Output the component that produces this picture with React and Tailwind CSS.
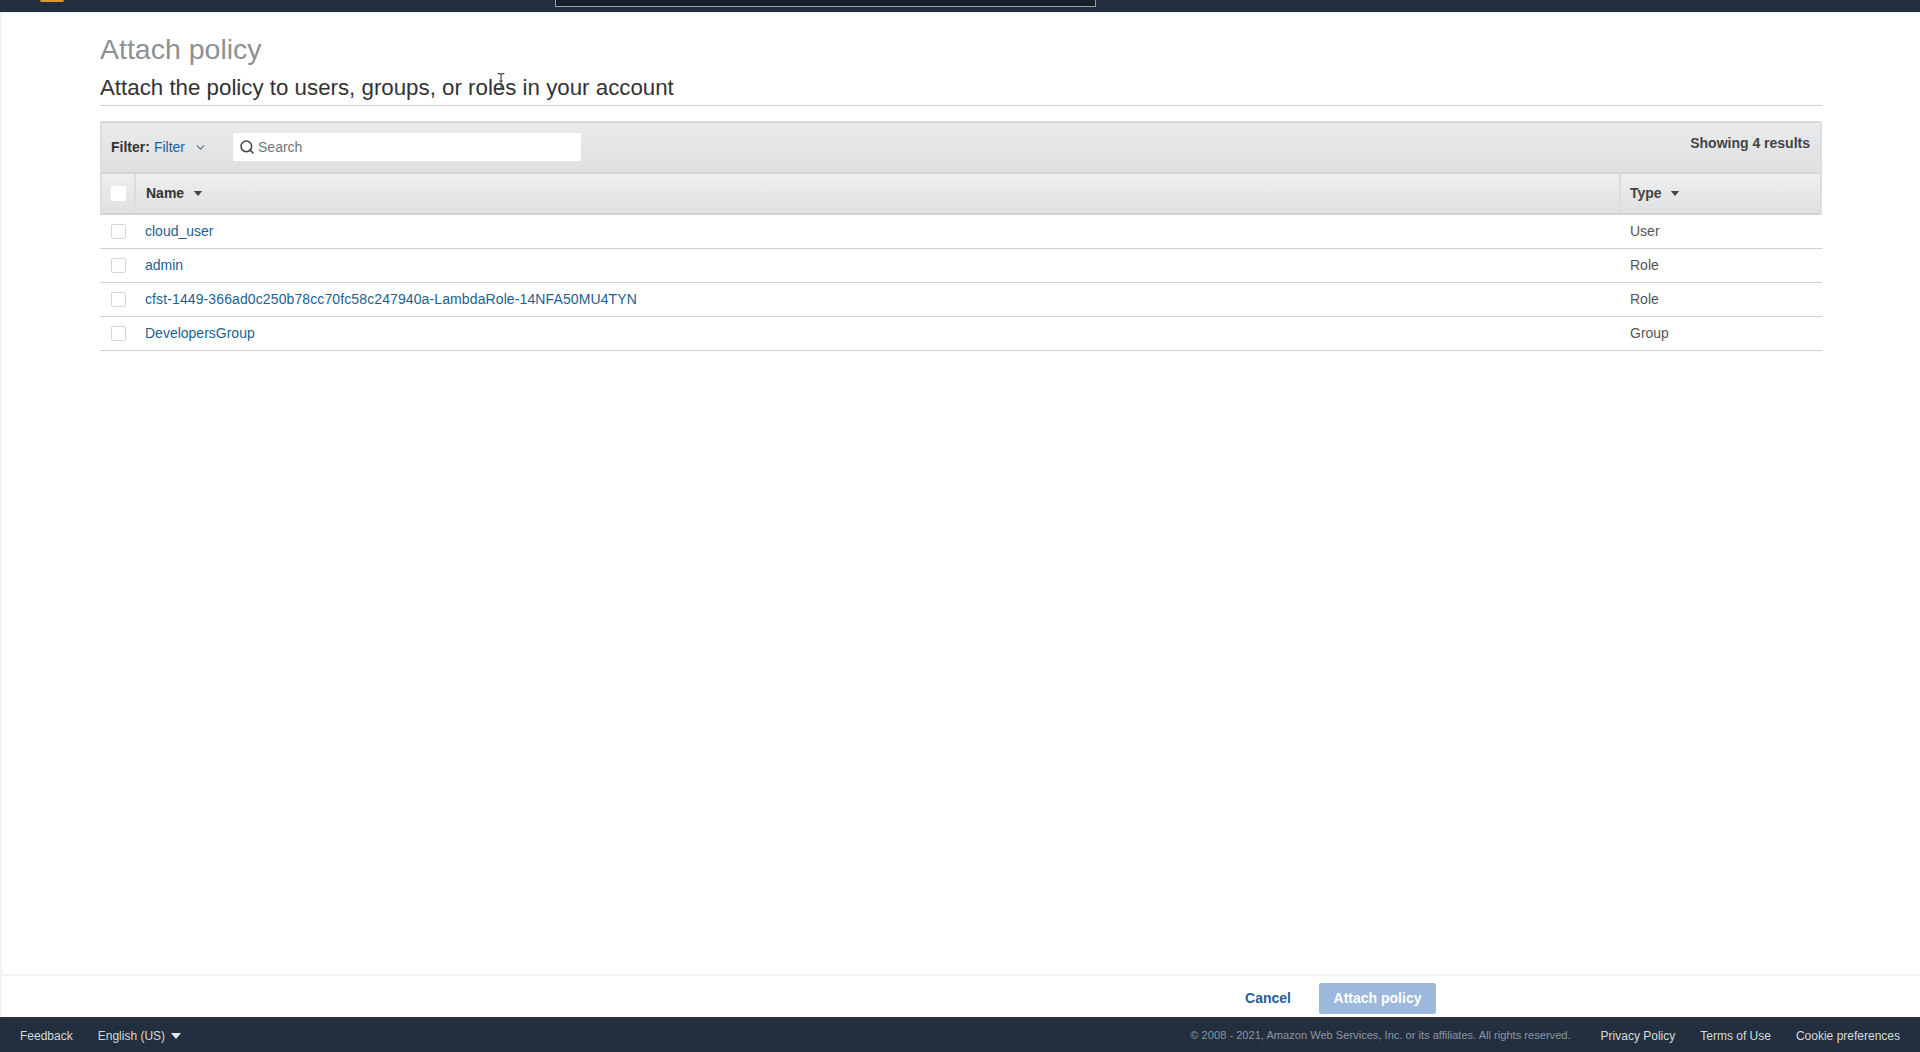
import { Search, ChevronDown } from "lucide-react";

const font = { fontFamily: '"Liberation Sans", Arial, sans-serif' };

const rows = [
  { name: "cloud_user", type: "User", linkClass: "" },
  { name: "admin", type: "Role", linkClass: "" },
  { name: "cfst-1449-366ad0c250b78cc70fc58c247940a-LambdaRole-14NFA50MU4TYN", type: "Role", linkClass: "tracking-[0.11px]" },
  { name: "DevelopersGroup", type: "Group", linkClass: "" },
];

const Caret = ({ className }) => (
  <svg viewBox="0 0 10 6" className={className}>
    <path d="M0 0h10L5 6z" fill="currentColor" />
  </svg>
);

const App = () => {
  return (
    <div style={font} className="relative w-[1920px] h-[1052px] flex flex-col overflow-hidden bg-white text-[#444]">
      {/* Top nav, cut off by the video frame */}
      <header className="relative shrink-0 h-[13px] bg-[#232f3e] border-b border-[#e9eff8]">
        <div className="absolute left-[40px] top-0 w-[24px] h-[2px] rounded-b-full bg-[#d9952f]" />
        <div className="absolute left-[555px] top-0 w-[541px] h-[7px] bg-[#161e2a] border-x border-b border-[#9aa0a8]" />
      </header>

      <main className="flex-1 min-h-0 flex flex-col border-l-2 border-[#f2f3f3] pl-[98px] pr-[98px]">
        <h1 className="mt-[19px] text-[28.5px] leading-[34px] text-[#8b9194]">Attach policy</h1>
        <h2 className="mt-[8px] text-[22.3px] leading-[28px] text-[#333]">Attach the policy to users, groups, or roles in your account</h2>
        <div className="mt-[3px] h-px bg-[#cfd1d2]" />

        {/* Table */}
        <section className="mt-[15px] border-x-2 border-t border-[#dcdddf]">
          <div className="h-[50px] flex items-start justify-between pl-[9px] pr-[10px] border-t border-[#d5d6d8] bg-gradient-to-b from-[#eaebed] to-[#dedfe1]">
            <div className="flex items-center h-[48px]">
              <span className="text-[14px] font-bold text-[#333]">Filter:</span>
              <span className="ml-[4px] text-[14px] text-[#1f5f9e]">Filter</span>
              <ChevronDown size={13} className="ml-[9px] text-[#5f6b7a]" />
              <div className="ml-[25px] w-[350px] h-[30px] flex items-center gap-[3px] pl-[6px] bg-white border border-[#e3e4e6] rounded-[2px]">
                <Search size={16} strokeWidth={2.25} className="text-[#444]" />
                <span className="text-[14px] text-[#6f757b]">Search</span>
              </div>
            </div>
            <span className="mt-[11px] text-[14px] leading-[18px] font-bold text-[#444]">Showing 4 results</span>
          </div>

          <div className="h-[43px] flex items-stretch border-y-2 border-[#d3d4d6] border-t-[#d5d6d8] bg-gradient-to-b from-[#eeeff0] to-[#dfe0e2]">
            <div className="w-[34px] flex items-center justify-center border-r-2 border-[#dcdddf]">
              <div className="w-[15px] h-[15px] bg-white rounded-[2px]" />
            </div>
            <div className="flex-1 flex items-center gap-[9px] pl-[10px] border-r-2 border-[#dcdddf]">
              <span className="text-[14px] font-bold text-[#333]">Name</span>
              <Caret className="w-[10px] h-[5px] text-[#444]" />
            </div>
            <div className="w-[199px] flex items-center gap-[8px] pl-[9px]">
              <span className="text-[14px] font-bold text-[#444]">Type</span>
              <Caret className="w-[10px] h-[5px] text-[#444]" />
            </div>
          </div>
        </section>

        <div>
          {rows.map((row) => (
            <div key={row.name} className="h-[34px] flex items-center border-b border-[#cfd1d2]">
              <div className="w-[36px] flex justify-center">
                <div className="w-[15px] h-[15px] border border-[#d5d6d8] rounded-[2px] bg-white" />
              </div>
              <a className={`flex-1 pl-[9px] text-[14px] text-[#1c5f93] ${row.linkClass}`}>{row.name}</a>
              <span className="w-[200px] pl-[8px] text-[14px] text-[#555]">{row.type}</span>
            </div>
          ))}
        </div>

        {/* Actions */}
        <div className="mt-auto -ml-[98px] -mr-[98px] h-[43px] flex items-center justify-end gap-[28px] pr-[484px] pt-[3px] border-t-2 border-[#f2f2f2]">
          <span className="text-[14px] font-bold text-[#1f5f93]">Cancel</span>
          <button className="w-[117px] h-[31px] rounded-[2px] bg-[#9cb8da] text-[14px] font-bold text-white">Attach policy</button>
        </div>
      </main>

      {/* Footer */}
      <footer className="shrink-0 h-[35px] flex items-center justify-between pl-[20px] pr-[20px] bg-[#232f3e] border-t-2 border-[#2e3338] text-[12px] text-[#d5dbdb]">
        <div className="flex items-center">
          <span>Feedback</span>
          <span className="ml-[25px]">English (US)</span>
          <Caret className="ml-[6px] w-[10px] h-[8px] text-[#e6e9ec]" />
        </div>
        <div className="flex items-center">
          <span className="text-[11.1px] text-[#8b96a3]">© 2008 - 2021, Amazon Web Services, Inc. or its affiliates. All rights reserved.</span>
          <span className="ml-[30px]">Privacy Policy</span>
          <span className="ml-[25px]">Terms of Use</span>
          <span className="ml-[25px]">Cookie preferences</span>
        </div>
      </footer>

      {/* Text cursor from the recording */}
      <svg viewBox="0 0 7 15" className="absolute left-[497px] top-[73px] w-[8px] h-[17px] text-[#444]">
        <path d="M0.5 0.5h2l1 1 1-1h2M3.5 1.5v12M0.5 14.5h2l1-1 1 1h2M2 7h3" fill="none" stroke="currentColor" strokeWidth="1" />
      </svg>
    </div>
  );
};

export default App;
